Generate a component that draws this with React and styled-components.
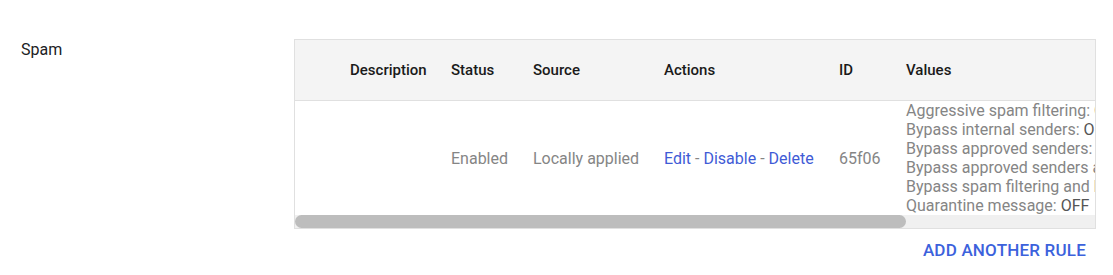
import styled, { createGlobalStyle } from "styled-components";

const Global = createGlobalStyle`
  body {
    margin: 0;
    background: #ffffff;
    font-family: Roboto, "Liberation Sans", sans-serif;
  }
`;

const Page = styled.div`
  padding-top: 39px;
`;

const Section = styled.div`
  display: flex;
  align-items: flex-start;
`;

const Label = styled.div`
  width: 273px;
  padding-left: 21px;
  padding-top: 1px;
  font-size: 16px;
  line-height: 19px;
  color: #202124;
`;

const Panel = styled.div`
  width: 802px;
  display: flex;
  flex-direction: column;
`;

const Frame = styled.div`
  border: 1px solid #e0e0e0;
  overflow: hidden;
`;

const Table = styled.table`
  width: 1048px;
  table-layout: fixed;
  border-collapse: collapse;
`;

const Head = styled.th`
  height: 60px;
  padding: 0;
  text-align: left;
  font-size: 15px;
  font-weight: 500;
  color: #1a1a1a;
  background: #f4f4f4;
  border-bottom: 1px solid #e0e0e0;
  white-space: nowrap;
`;

const Cell = styled.td`
  padding: 0;
  height: 113px;
  vertical-align: ${(p) => (p.$top ? "top" : "middle")};
  font-size: 16px;
  line-height: 19px;
  color: #858585;
  white-space: nowrap;
`;

const Action = styled.span`
  color: #3f5bd6;
`;

const Line = styled.div`
  line-height: 19px;
`;

const Val = styled.span`
  color: #555;
`;

const Track = styled.div`
  height: 13px;
  background: #f0f0f0;
  display: flex;
`;

const Thumb = styled.div`
  width: 611px;
  background: #bdbdbd;
  border-radius: 7px;
`;

const Footer = styled.div`
  display: flex;
  justify-content: flex-end;
  padding: 11px 10px 0 0;
`;

const AddButton = styled.button`
  border: none;
  background: none;
  padding: 0;
  font-family: Roboto, "Liberation Sans", sans-serif;
  font-size: 17px;
  font-weight: 500;
  letter-spacing: 0.2px;
  color: #3c62dc;
  text-transform: uppercase;
  cursor: pointer;
`;

const widths = [55, 101, 82, 131, 175, 67, 437];
const headers = ["", "Description", "Status", "Source", "Actions", "ID", "Values"];

const values = [
  ["Aggressive spam filtering", "OFF"],
  ["Bypass internal senders", "OFF"],
  ["Bypass approved senders", "OFF"],
  ["Bypass approved senders and domains", "OFF"],
  ["Bypass spam filtering and blocked senders", "OFF"],
  ["Quarantine message", "OFF"],
];

export default function App() {
  return (
    <>
      <Global />
      <Page>
        <Section>
          <Label>Spam</Label>
          <Panel>
            <Frame>
              <Table>
                <colgroup>
                  {widths.map((w, i) => (
                    <col key={i} style={{ width: w }} />
                  ))}
                </colgroup>
                <thead>
                  <tr>
                    {headers.map((h, i) => (
                      <Head key={i}>{h}</Head>
                    ))}
                  </tr>
                </thead>
                <tbody>
                  <tr>
                    <Cell />
                    <Cell />
                    <Cell>Enabled</Cell>
                    <Cell>Locally applied</Cell>
                    <Cell>
                      <Action>Edit</Action> - <Action>Disable</Action> -{" "}
                      <Action>Delete</Action>
                    </Cell>
                    <Cell>65f06</Cell>
                    <Cell $top>
                      {values.map(([k, v]) => (
                        <Line key={k}>
                          {k}: <Val>{v}</Val>
                        </Line>
                      ))}
                    </Cell>
                  </tr>
                </tbody>
              </Table>
              <Track>
                <Thumb />
              </Track>
            </Frame>
            <Footer>
              <AddButton>Add another rule</AddButton>
            </Footer>
          </Panel>
        </Section>
      </Page>
    </>
  );
}
